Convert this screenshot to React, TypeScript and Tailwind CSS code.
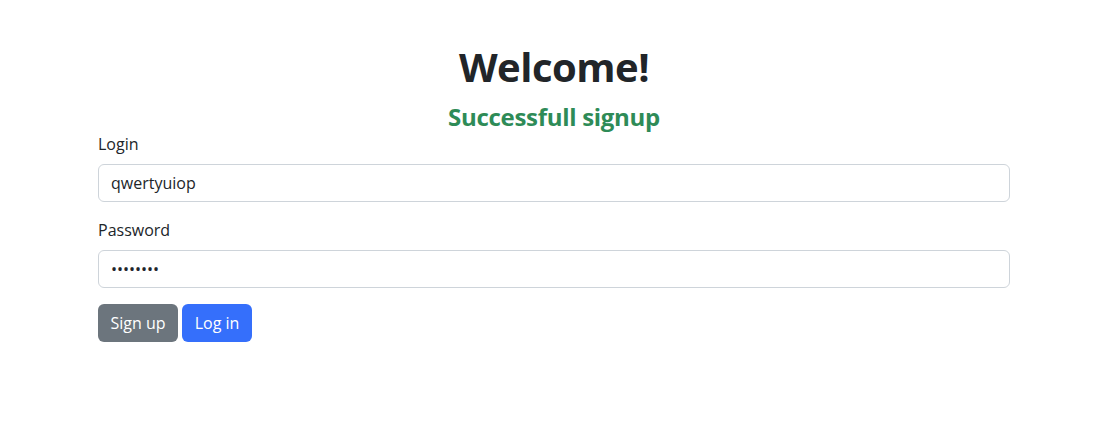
import React, { useState } from "react";

const font = { fontFamily: '"Open Sans", "Noto Sans", sans-serif' };

const App = () => {
  const [login, setLogin] = useState("qwertyuiop");
  const [password, setPassword] = useState("qwertyui");

  return (
    <div className="min-h-[421px] bg-white text-[#212529]" style={font}>
      <div className="w-[912px] ml-[98px] pt-[43px]">
        {/* heading + status */}
        <h1 className="text-center text-[40px] leading-[48px] font-bold tracking-[-0.5px]">Welcome!</h1>
        <h4 className="mt-[11px] text-center text-[24px] leading-[29px] font-bold text-[#2e8b57] tracking-[-0.3px]">
          Successfull signup
        </h4>

        {/* form */}
        <form className="mt-[1px]" onSubmit={(e) => e.preventDefault()}>
          <div className="mb-4">
            <label className="block mb-2 text-base leading-6">Login</label>
            <input
              type="text"
              value={login}
              onChange={(e) => setLogin(e.target.value)}
              className="block w-full h-[38px] px-3 text-base border border-[#ced4da] rounded-md outline-none"
            />
          </div>
          <div className="mb-4">
            <label className="block mb-2 text-base leading-6">Password</label>
            <input
              type="password"
              value={password}
              onChange={(e) => setPassword(e.target.value)}
              className="block w-full h-[38px] px-3 text-base border border-[#ced4da] rounded-md outline-none"
            />
          </div>
          <div className="flex gap-1">
            <button type="button" className="h-[38px] w-[80px] text-base text-white bg-[#6c757d] rounded-md">
              Sign up
            </button>
            <button type="submit" className="h-[38px] w-[70px] text-base text-white bg-[#356ffb] rounded-md">
              Log in
            </button>
          </div>
        </form>
      </div>
    </div>
  );
};

export default App;
